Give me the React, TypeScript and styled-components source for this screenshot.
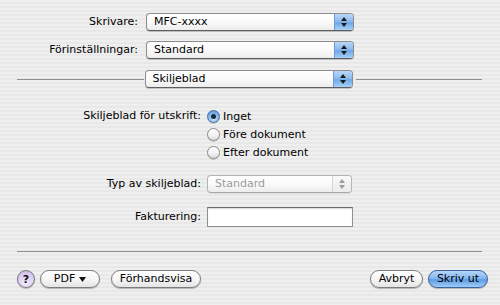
import styled, { createGlobalStyle, css } from "styled-components";

const GlobalStyle = createGlobalStyle`
  html, body {
    margin: 0;
    padding: 0;
  }
  body {
    font-family: "DejaVu Sans", "Liberation Sans", sans-serif;
    font-size: 11px;
    color: #000;
  }
`;

const Dialog = styled.div`
  width: 500px;
  height: 305px;
  box-sizing: border-box;
  display: flex;
  flex-direction: column;
  background: repeating-linear-gradient(
    to bottom,
    #efefef 0,
    #efefef 2px,
    #e8e8e8 2px,
    #e8e8e8 4px
  );
  overflow: hidden;
`;

const TopForm = styled.div`
  display: grid;
  grid-template-columns: 138px 208px;
  column-gap: 8px;
  row-gap: 10px;
  padding-top: 13px;
  align-items: center;
`;

const Label = styled.span<{ $top?: boolean }>`
  text-align: right;
  white-space: nowrap;
  line-height: 18px;
  ${({ $top }) =>
    $top &&
    css`
      align-self: start;
    `}
`;

const PopUpBox = styled.div<{ $width: number; $disabled?: boolean }>`
  position: relative;
  width: ${({ $width }) => $width}px;
  height: 18px;
  box-sizing: border-box;
  display: flex;
  align-items: center;
  border: 1px solid ${({ $disabled }) => ($disabled ? "#b4b4b4" : "#8c8c8c")};
  border-bottom-color: ${({ $disabled }) => ($disabled ? "#a8a8a8" : "#5e5e5e")};
  border-radius: 4px;
  background: linear-gradient(to bottom, #ffffff 0%, #fafafa 50%, #ececec 100%);
  box-shadow: 0 1px 0 rgba(0, 0, 0, ${({ $disabled }) => ($disabled ? 0.06 : 0.18)});
  color: ${({ $disabled }) => ($disabled ? "#9a9a9a" : "#000")};
  overflow: hidden;
`;

const PopUpValue = styled.span`
  flex: 1;
  padding-left: 7px;
  white-space: nowrap;
  line-height: 16px;
`;

const PopUpArrows = styled.div<{ $disabled?: boolean }>`
  width: 18px;
  height: 100%;
  display: flex;
  flex-direction: column;
  align-items: center;
  justify-content: center;
  gap: 2px;
  border-left: 1px solid ${({ $disabled }) => ($disabled ? "#d4d4d4" : "#6f9bd2")};
  background: ${({ $disabled }) =>
    $disabled
      ? "linear-gradient(to bottom, #fafafa 0%, #f2f2f2 50%, #ebebeb 100%)"
      : "linear-gradient(to bottom, #b9d6f7 0%, #8ebcef 45%, #6fa8ea 55%, #a6d0f8 100%)"};
  color: ${({ $disabled }) => ($disabled ? "#9c9c9c" : "#1a1a1a")};
`;

const Rule = styled.div`
  flex: 1;
  height: 1px;
  background: #8e8e8e;
`;

const PaneSelector = styled.div`
  display: flex;
  align-items: center;
  margin-top: 11px;
  padding: 0 18px 0 17px;
  gap: 0;

  & > ${PopUpBox} {
    margin: 0 3px 0 1px;
  }
`;

const OptionsForm = styled.div`
  display: grid;
  grid-template-columns: 201px 146px;
  column-gap: 6px;
  row-gap: 14px;
  margin-top: 19px;
  align-items: center;
`;

const RadioGroup = styled.div`
  display: flex;
  flex-direction: column;
`;

const RadioRow = styled.label`
  display: flex;
  align-items: center;
  gap: 3px;
  height: 18px;
  white-space: nowrap;
`;

const RadioDot = styled.span<{ $checked?: boolean }>`
  width: 13px;
  height: 13px;
  box-sizing: border-box;
  border-radius: 50%;
  display: flex;
  align-items: center;
  justify-content: center;
  border: 1px solid ${({ $checked }) => ($checked ? "#44709e" : "#8a8a8a")};
  background: ${({ $checked }) =>
    $checked
      ? "radial-gradient(circle at 50% 70%, #cfe6fd 0%, #7fb3ec 55%, #4f8ad6 100%)"
      : "linear-gradient(to bottom, #ffffff 0%, #f3f3f3 55%, #dcdcdc 100%)"};
  box-shadow: 0 1px 0 rgba(0, 0, 0, 0.15);

  &::after {
    content: "";
    display: ${({ $checked }) => ($checked ? "block" : "none")};
    width: 5px;
    height: 5px;
    border-radius: 50%;
    background: #1c2a3a;
  }
`;

const TextField = styled.input`
  width: 146px;
  height: 20px;
  box-sizing: border-box;
  border: 1px solid #8f8f8f;
  border-top-color: #6c6c6c;
  background: #fff;
  box-shadow: inset 0 1px 1px rgba(0, 0, 0, 0.15);
  padding: 0 3px;
  font: inherit;
  outline: none;
  align-self: center;
`;

const BottomRule = styled.div`
  height: 1px;
  margin: 24px 18px 0 17px;
  background: #8e8e8e;
`;

const ButtonBar = styled.div`
  display: flex;
  align-items: center;
  margin-top: 18px;
  padding: 0 12px 0 17px;
`;

const ButtonGroup = styled.div<{ $gap: number }>`
  display: flex;
  align-items: center;
  gap: ${({ $gap }) => $gap}px;
`;

const Spacer = styled.div`
  flex: 1;
`;

const Button = styled.button<{ $width: number; $primary?: boolean }>`
  width: ${({ $width }) => $width}px;
  height: 18px;
  box-sizing: border-box;
  border-radius: 9px;
  border: 1px solid ${({ $primary }) => ($primary ? "#3a63a0" : "#7d7d7d")};
  background: ${({ $primary }) =>
    $primary
      ? "linear-gradient(to bottom, #b5d6f8 0%, #86b8ef 45%, #5d9be4 55%, #9fcdf6 100%)"
      : "linear-gradient(to bottom, #ffffff 0%, #f6f6f6 50%, #e4e4e4 100%)"};
  box-shadow: 0 1px 1px rgba(0, 0, 0, 0.25);
  font: inherit;
  color: #000;
  padding: 0;
  display: flex;
  align-items: center;
  justify-content: center;
  gap: 4px;
  white-space: nowrap;
  line-height: 16px;
  margin-left: ${({ $primary }) => ($primary ? "0" : "0")};
`;

const HelpButton = styled.button`
  width: 18px;
  height: 18px;
  box-sizing: border-box;
  border-radius: 50%;
  border: 1px solid #7a7a7a;
  background: radial-gradient(circle at 50% 75%, #f4ecff 0%, #dacbf2 60%, #c3b2e2 100%);
  box-shadow: 0 1px 1px rgba(0, 0, 0, 0.25);
  font: inherit;
  font-weight: bold;
  font-size: 11px;
  color: #111;
  padding: 0;
  display: flex;
  align-items: center;
  justify-content: center;
`;

function UpDown() {
  return (
    <>
      <svg width="6" height="4" viewBox="0 0 6 4">
        <polygon points="3,0 6,4 0,4" fill="currentColor" />
      </svg>
      <svg width="6" height="4" viewBox="0 0 6 4">
        <polygon points="0,0 6,0 3,4" fill="currentColor" />
      </svg>
    </>
  );
}

function PopUp({
  value,
  width,
  disabled,
}: {
  value: string;
  width: number;
  disabled?: boolean;
}) {
  return (
    <PopUpBox $width={width} $disabled={disabled}>
      <PopUpValue>{value}</PopUpValue>
      <PopUpArrows $disabled={disabled}>
        <UpDown />
      </PopUpArrows>
    </PopUpBox>
  );
}

const separators = [
  { id: 1, label: "Inget", checked: true },
  { id: 2, label: "Före dokument" },
  { id: 3, label: "Efter dokument" },
];

export default function App() {
  return (
    <>
      <GlobalStyle />
      <Dialog>
        <TopForm>
          <Label>Skrivare:</Label>
          <PopUp value="MFC-xxxx" width={208} />
          <Label>Förinställningar:</Label>
          <PopUp value="Standard" width={208} />
        </TopForm>

        <PaneSelector>
          <Rule />
          <PopUp value="Skiljeblad" width={208} />
          <Rule />
        </PaneSelector>

        <OptionsForm>
          <Label $top>Skiljeblad för utskrift:</Label>
          <RadioGroup>
            {separators.map((s) => (
              <RadioRow key={s.id}>
                <RadioDot $checked={s.checked} />
                {s.label}
              </RadioRow>
            ))}
          </RadioGroup>
          <Label>Typ av skiljeblad:</Label>
          <PopUp value="Standard" width={145} disabled />
          <Label>Fakturering:</Label>
          <TextField />
        </OptionsForm>

        <BottomRule />

        <ButtonBar>
          <ButtonGroup $gap={5}>
            <HelpButton>?</HelpButton>
            <Button $width={60}>
              PDF
              <svg width="7" height="5" viewBox="0 0 7 5">
                <polygon points="0,0 7,0 3.5,5" fill="#111" />
              </svg>
            </Button>
            <Button $width={90} style={{ marginLeft: 6 }}>
              Förhandsvisa
            </Button>
          </ButtonGroup>
          <Spacer />
          <ButtonGroup $gap={5}>
            <Button $width={53}>Avbryt</Button>
            <Button $width={60} $primary>
              Skriv ut
            </Button>
          </ButtonGroup>
        </ButtonBar>
      </Dialog>
    </>
  );
}
